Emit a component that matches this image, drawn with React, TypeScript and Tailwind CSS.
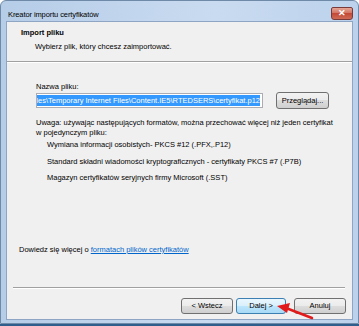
import React from "react";

const font = { fontFamily: '"Liberation Sans", Arial, sans-serif' };

function WinButton({ label, primary, className }: { label: string; primary?: boolean; className?: string }) {
  return (
    <div
      className={[
        "flex items-center justify-center rounded-[3px] border text-[7.5px] leading-none text-black",
        primary
          ? "border-[#3c7fb1] bg-[linear-gradient(#eaf6fd,#d9f0fc_50%,#bee6fd_50%,#a7d9f5)]"
          : "border-[#707070] bg-[linear-gradient(#f2f2f2,#ebebeb_50%,#dddddd_50%,#cfcfcf)]",
        className || "",
      ].join(" ")}
    >
      {label}
    </div>
  );
}

export default function App() {
  return (
    <div className="relative h-[326px] w-[359px] overflow-hidden bg-white" style={font}>
      <div className="flex h-[324px] w-[359px] flex-col rounded-t-[6px] border border-[#6f8aa8] bg-[linear-gradient(90deg,#b6cde8,#c9dbf0_60%,#bcd2ec)]">
        {/* title bar */}
        <div className="flex h-[20px] shrink-0 items-start justify-between pl-[7px] pr-[5px]">
          <span className="mt-[9px] text-[7.5px] leading-[10px] tracking-[-0.1px] text-black">Kreator importu certyfikatów</span>
          <div className="mt-[6px] flex h-[13px] w-[22px] items-center justify-center rounded-b-[3px] rounded-t-[2px] border border-[#7a3a3a] bg-[linear-gradient(#e6a596,#d1705e_50%,#c24a37_50%,#cf6b55)]">
            <span className="text-[9px] font-bold leading-none text-white">✕</span>
          </div>
        </div>

        {/* client area */}
        <div className="mx-[5px] flex h-[299px] flex-col border border-[#8ea6c4] bg-[#f0f0f0] text-[7.5px] leading-[10px] text-black">
          <div className="h-[39px] shrink-0 pl-[14px] pt-[6px]">
            <div className="font-bold">Import pliku</div>
            <div className="ml-[14px] mt-[4px]">Wybierz plik, który chcesz zaimportować.</div>
          </div>
          <div className="h-[1px] shrink-0 bg-[#a0a0a0]" />
          <div className="h-[1px] shrink-0 bg-white" />

          <div className="pl-[29px] pr-[23px]">
            <div className="mt-[19px]">Nazwa pliku:</div>
            <div className="flex items-center gap-[13px]">
              <div className="flex h-[15px] w-[227px] items-center justify-end overflow-hidden border border-[#abadb3] bg-white pr-[2px]">
                <span className="whitespace-nowrap bg-[#3399ff] leading-[11px] text-white">
                  Files\Temporary Internet Files\Content.IE5\RTEDSERS\certyfikat.p12
                </span>
              </div>
              <WinButton label="Przeglądaj..." className="h-[17px] w-[53px]" />
            </div>
            <div className="mt-[9px] whitespace-nowrap">
              Uwaga: używając następujących formatów, można przechować więcej niż jeden certyfikat
              <br />w pojedynczym pliku:
            </div>
            <div className="ml-[11px] whitespace-nowrap">
              <div className="mt-[2px]">Wymiana informacji osobistych- PKCS #12 (.PFX,.P12)</div>
              <div className="mt-[7px]">Standard składni wiadomości kryptograficznych - certyfikaty PKCS #7 (.P7B)</div>
              <div className="mt-[6px]">Magazyn certyfikatów seryjnych firmy Microsoft (.SST)</div>
            </div>
          </div>

          <div className="flex-1" />

          <div className="ml-[12px]">
            Dowiedz się więcej o{" "}
            <span className="text-[#0066cc] underline">formatach plików certyfikatów</span>
          </div>

          <div className="ml-[6px] mr-[7px] mt-[32px] h-[1px] bg-[#a0a0a0]" />
          <div className="ml-[6px] mr-[7px] h-[1px] bg-white" />

          <div className="mb-[5px] mr-[6px] mt-[9px] flex justify-end">
            <WinButton label="< Wstecz" className="h-[16px] w-[52px]" />
            <WinButton label="Dalej >" primary className="ml-[3px] h-[16px] w-[50px]" />
            <WinButton label="Anuluj" className="ml-[8px] h-[16px] w-[52px]" />
          </div>
        </div>
      </div>
      <div className="h-[2px] bg-[#2f5d8c]" />

      {/* red arrow */}
      <svg className="absolute left-[270px] top-[298px]" width="50" height="28" viewBox="0 0 50 28">
        <path d="M42 20 L16 10" stroke="#e11b1b" strokeWidth="2.5" strokeLinecap="round" />
        <path d="M7 8 L20 5 L17 15 Z" fill="#e11b1b" />
      </svg>
    </div>
  );
}
